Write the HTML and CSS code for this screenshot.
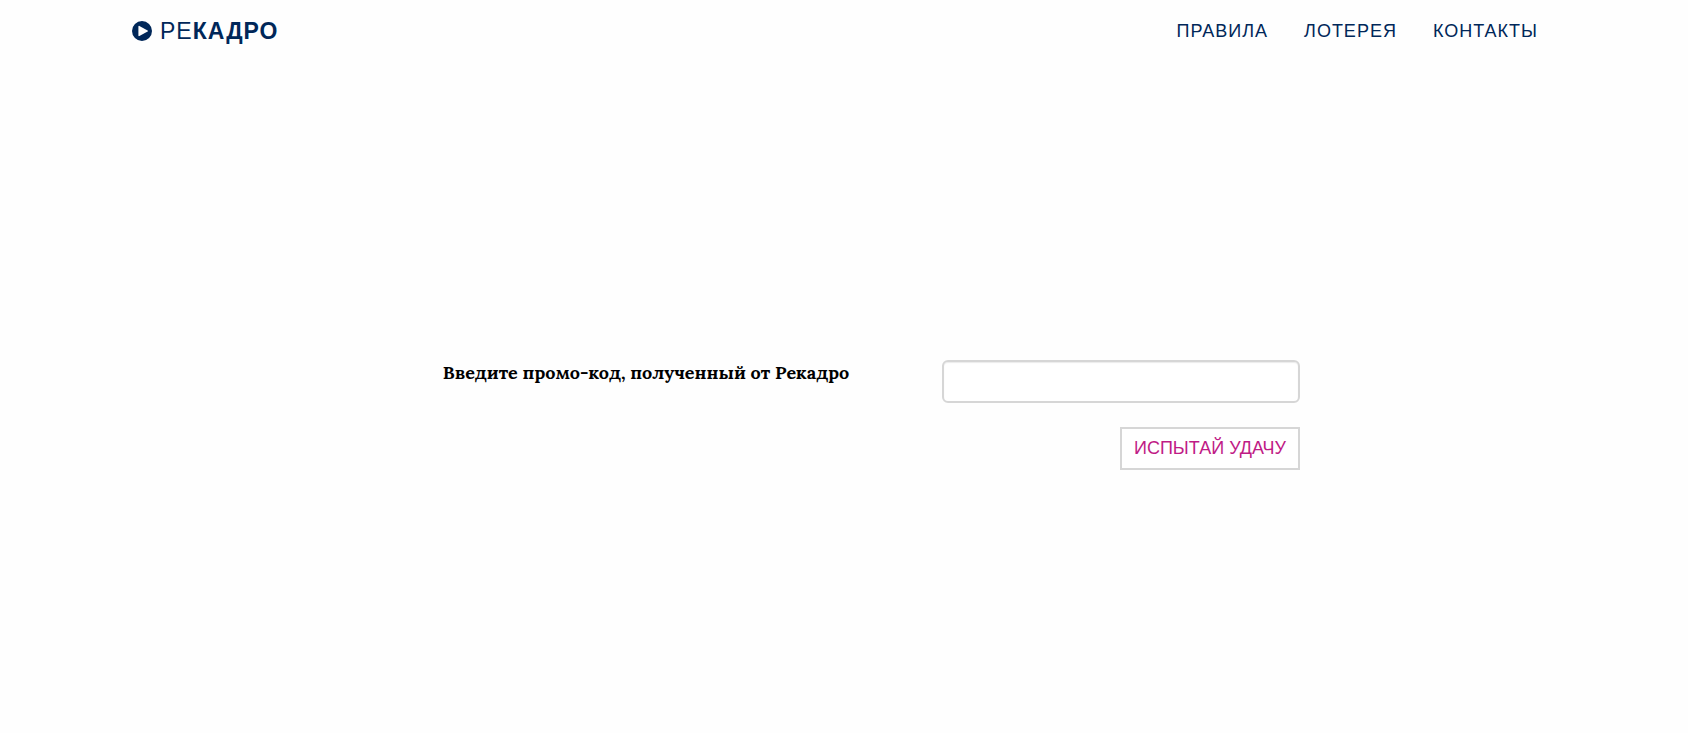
FILE: index.html
```
<!DOCTYPE html>
<html lang="ru">
<head>
    <meta charset="UTF-8">
    <meta name="viewport" content="width=device-width, initial-scale=1.0">
    <title>Рекадро</title>
    <link rel="stylesheet" href="styles.css">
</head>
<body>

    <nav class="navbar">
        <div class="container">
            <a class="navbar-brand" href="#page-top">
                <svg class="icon" viewBox="0 0 20 20" aria-hidden="true">
                    <path fill="currentColor" fill-rule="evenodd" d="M10 0a10 10 0 1 1 0 20a10 10 0 0 1 0-20zM7.4 4.9c-.5-.3-1 0-1 .6v9c0 .6.5.9 1 .6l8.2-4.5c.5-.3.5-.9 0-1.2z"/>
                </svg>
                <span>РЕ<b>КАДРО</b></span>
            </a>
            <ul class="nav">
                <li><a href="#rules">Правила</a></li>
                <li><a href="#lottery">Лотерея</a></li>
                <li><a href="#contact">Контакты</a></li>
            </ul>
        </div>
    </nav>

    <main class="intro">
        <form class="promo-form">
            <label for="code">Введите промо-код, полученный от Рекадро</label>
            <input type="text" id="code" name="code">
            <button type="submit" class="btn">Испытай удачу</button>
        </form>
    </main>

</body>
</html>
```
FILE: styles.css
```
body {
    margin: 0;
    font-family: Lora, "Liberation Serif", serif;
    font-size: 18px;
    color: #000;
    background-color: #fefefe;
}
.container {
    display: flex;
    justify-content: space-between;
    align-items: center;
    box-sizing: border-box;
    max-width: 1464px;
    height: 62px;
    margin: 0 auto;
    padding: 0 20px;
}
.navbar {
    font-family: "Liberation Sans", Arial, sans-serif;
    text-transform: uppercase;
    letter-spacing: 1px;
}
.navbar a {
    color: #002759;
    text-decoration: none;
}
.navbar .navbar-brand {
    display: flex;
    align-items: center;
    gap: 8px;
    font-size: 23px;
}
.icon {
    width: 20px;
    height: 20px;
}
.nav {
    display: flex;
    margin: 0;
    padding: 0;
    list-style: none;
}
.nav a {
    display: block;
    padding: 0 18px;
}
.intro {
    padding: 298px 20px 40px;
}
.promo-form {
    display: grid;
    grid-template-columns: 1fr 358px;
    gap: 24px 38px;
    max-width: 912px;
    margin: 0 auto;
}
.promo-form label {
    font-weight: bold;
    line-height: 26px;
    text-align: center;
}
.promo-form input {
    box-sizing: border-box;
    height: 43px;
    padding: 8px 15px;
    border: 2px solid #d6d6d6;
    border-radius: 6px;
    font-size: 18px;
    background: #fff;
    box-shadow: inset 0 1px 1px rgba(0,0,0,0.08);
}
.btn {
    grid-column: 2;
    justify-self: end;
    box-sizing: border-box;
    height: 43px;
    padding: 0 12px;
    border: 2px solid #d6d6d6;
    font-family: "Liberation Sans", Arial, sans-serif;
    font-size: 18px;
    text-transform: uppercase;
    color: #bf1b86;
    background: #fff;
    cursor: pointer;
}
```
